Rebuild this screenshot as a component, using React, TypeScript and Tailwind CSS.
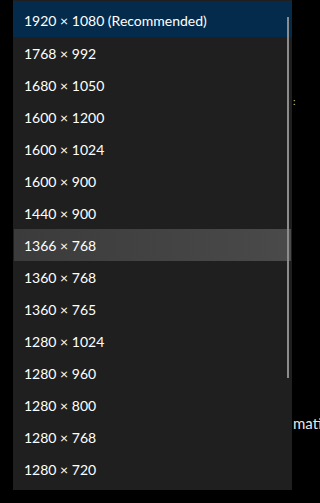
const sizes = [
  "1920 × 1080 (Recommended)",
  "1768 × 992",
  "1680 × 1050",
  "1600 × 1200",
  "1600 × 1024",
  "1600 × 900",
  "1440 × 900",
  "1366 × 768",
  "1360 × 768",
  "1360 × 765",
  "1280 × 1024",
  "1280 × 960",
  "1280 × 800",
  "1280 × 768",
  "1280 × 720",
];

export default function App() {
  return (
    <div
      className="w-[320px] h-[503px] bg-black overflow-hidden text-white flex"
      style={{ fontFamily: 'Lato, "Noto Sans", sans-serif' }}
    >
      <div className="w-[13px] shrink-0" />

      <div className="relative w-[279px] h-[490px] shrink-0 bg-[#1f1f1f] pt-px">
        <ul className="flex flex-col">
          {sizes.map((s, i) => {
            if (i === 0)
              return (
                <li key={s} className="h-[36px] flex items-center pl-[11px] pt-[2px] bg-[#042b4b] text-[14px]">
                  {s}
                </li>
              );
            if (i === 7)
              return (
                <li
                  key={s}
                  className="h-[32px] flex items-center pl-[10px] mx-px bg-gradient-to-r from-[#3b3b3b] to-[#4a4a4a] text-[14px]"
                >
                  {s}
                </li>
              );
            return (
              <li key={s} className="h-[32px] flex items-center pl-[11px] text-[14px]">
                {s}
              </li>
            );
          })}
        </ul>
        {/* scrollbar thumb over the list */}
        <div className="absolute right-[3px] top-[17px] w-[2px] h-[361px] bg-[#8c8c8c]" />
      </div>

      {/* settings page text peeking out behind the list */}
      <div className="flex flex-col pl-[1px] pt-[96px] text-[#e6e6e6] whitespace-nowrap">
        <span className="text-[10px] leading-none text-[#d0d0d0]">:</span>
        <span className="mt-[306px] text-[15px]">mati</span>
      </div>
    </div>
  );
}
